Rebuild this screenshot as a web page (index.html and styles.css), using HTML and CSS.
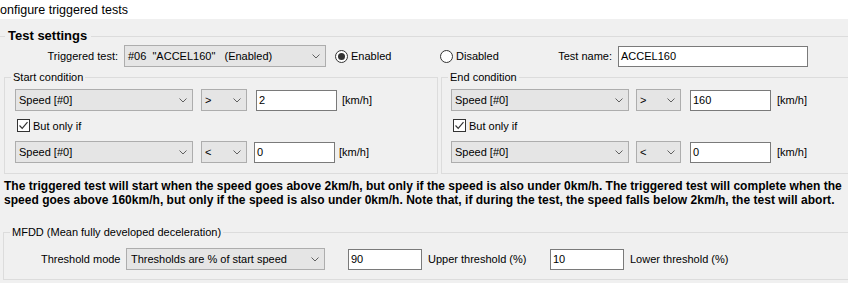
FILE: index.html
```html
<!DOCTYPE html>
<html>
<head>
<meta charset="utf-8">
<link rel="stylesheet" href="styles.css">
</head>
<body>
<div class="title"><span class="title-text">Configure triggered tests</span></div>
<fieldset class="grp grp-main">
  <legend class="lg lg-main">Test settings</legend>
  <div class="row-top">
    <span class="lbl-trig">Triggered test:</span>
    <div class="combo combo-trig"><span class="combo-text">#06  "ACCEL160"   (Enabled)</span><svg class="chev" width="8" height="5" viewBox="0 0 8 5"><path d="M0.5 0.5 L4 4 L7.5 0.5" fill="none" stroke="#606060" stroke-width="1"/></svg></div>
    <div class="radio radio-en"><span class="dot dot-on"></span><span>Enabled</span></div>
    <div class="radio radio-dis"><span class="dot"></span><span>Disabled</span></div>
    <span class="lbl-name"><span>Test name:</span></span>
    <div class="input input-name">ACCEL160</div>
  </div>
  <div class="conds">
    <fieldset class="grp grp-start">
      <legend class="lg">Start condition</legend>
      <div class="cbody cbody-start">
        <div class="crow">
          <div class="combo combo-sig"><span class="combo-text">Speed [#0]</span><svg class="chev" width="8" height="5" viewBox="0 0 8 5"><path d="M0.5 0.5 L4 4 L7.5 0.5" fill="none" stroke="#606060" stroke-width="1"/></svg></div>
          <div class="combo combo-op"><span class="combo-text">&gt;</span><svg class="chev" width="8" height="5" viewBox="0 0 8 5"><path d="M0.5 0.5 L4 4 L7.5 0.5" fill="none" stroke="#606060" stroke-width="1"/></svg></div>
          <div class="input input-val">2</div>
          <span class="unit">[km/h]</span>
        </div>
        <div class="chk-row"><span class="chk"><svg width="11" height="11" viewBox="0 0 11 11"><path d="M1.5 5.5 L4.2 8.3 L9.5 2.2" fill="none" stroke="#333" stroke-width="1.2"/></svg></span><span>But only if</span></div>
        <div class="crow crow-2">
          <div class="combo combo-sig"><span class="combo-text">Speed [#0]</span><svg class="chev" width="8" height="5" viewBox="0 0 8 5"><path d="M0.5 0.5 L4 4 L7.5 0.5" fill="none" stroke="#606060" stroke-width="1"/></svg></div>
          <div class="combo combo-op"><span class="combo-text">&lt;</span><svg class="chev" width="8" height="5" viewBox="0 0 8 5"><path d="M0.5 0.5 L4 4 L7.5 0.5" fill="none" stroke="#606060" stroke-width="1"/></svg></div>
          <div class="input input-val input-val2">0</div>
          <span class="unit unit-2">[km/h]</span>
        </div>
      </div>
    </fieldset>
    <fieldset class="grp grp-end">
      <legend class="lg">End condition</legend>
      <div class="cbody cbody-end">
        <div class="crow">
          <div class="combo combo-sig"><span class="combo-text">Speed [#0]</span><svg class="chev" width="8" height="5" viewBox="0 0 8 5"><path d="M0.5 0.5 L4 4 L7.5 0.5" fill="none" stroke="#606060" stroke-width="1"/></svg></div>
          <div class="combo combo-op combo-op-end"><span class="combo-text">&gt;</span><svg class="chev" width="8" height="5" viewBox="0 0 8 5"><path d="M0.5 0.5 L4 4 L7.5 0.5" fill="none" stroke="#606060" stroke-width="1"/></svg></div>
          <div class="input input-val">160</div>
          <span class="unit unit-end">[km/h]</span>
        </div>
        <div class="chk-row"><span class="chk"><svg width="11" height="11" viewBox="0 0 11 11"><path d="M1.5 5.5 L4.2 8.3 L9.5 2.2" fill="none" stroke="#333" stroke-width="1.2"/></svg></span><span>But only if</span></div>
        <div class="crow crow-2">
          <div class="combo combo-sig"><span class="combo-text">Speed [#0]</span><svg class="chev" width="8" height="5" viewBox="0 0 8 5"><path d="M0.5 0.5 L4 4 L7.5 0.5" fill="none" stroke="#606060" stroke-width="1"/></svg></div>
          <div class="combo combo-op combo-op-end"><span class="combo-text">&lt;</span><svg class="chev" width="8" height="5" viewBox="0 0 8 5"><path d="M0.5 0.5 L4 4 L7.5 0.5" fill="none" stroke="#606060" stroke-width="1"/></svg></div>
          <div class="input input-val">0</div>
          <span class="unit unit-end">[km/h]</span>
        </div>
      </div>
    </fieldset>
  </div>
  <p class="desc"><span class="desc-line">The triggered test will start when the speed goes above 2km/h, but only if the speed is also under 0km/h. The triggered test will complete when the</span><br><span class="desc-line">speed goes above 160km/h, but only if the speed is also under 0km/h. Note that, if during the test, the speed falls below 2km/h, the test will abort.</span></p>
  <fieldset class="grp grp-mfdd">
    <legend class="lg">MFDD (Mean fully developed deceleration)</legend>
    <div class="mrow">
      <span class="lbl-mode">Threshold mode</span>
      <div class="combo combo-mode"><span class="combo-text">Thresholds are % of start speed</span><svg class="chev" width="8" height="5" viewBox="0 0 8 5"><path d="M0.5 0.5 L4 4 L7.5 0.5" fill="none" stroke="#606060" stroke-width="1"/></svg></div>
      <div class="input input-th input-up">90</div>
      <span class="lbl-th">Upper threshold (%)</span>
      <div class="input input-th">10</div>
      <span class="lbl-th2">Lower threshold (%)</span>
    </div>
  </fieldset>
</fieldset>
</body>
</html>
```

FILE: styles.css
```css
html, body {
  margin: 0;
  padding: 0;
}
body {
  width: 848px;
  height: 283px;
  overflow: hidden;
  background: #f0f0f0;
  font-family: "Liberation Sans", Arial, sans-serif;
  font-size: 11px;
  color: #000;
}
.title {
  height: 19px;
  background: #fff;
  display: flex;
  align-items: center;
  overflow: hidden;
}
.title-text {
  margin-left: -9px;
  font-size: 12.5px;
  white-space: nowrap;
}
.grp {
  margin: 0;
  padding: 0;
  border: 1px solid #dcdcdc;
  min-width: 0;
  box-sizing: border-box;
}
.lg {
  padding: 0 2px;
  margin-left: 6px;
  line-height: 14px;
  font-size: 11px;
  white-space: nowrap;
}
.grp-main {
  margin: 9px -40px 0 -1px;
  border-bottom: none;
  padding-bottom: 20px;
}
.lg-main {
  font-weight: bold;
  font-size: 13px;
  line-height: 16px;
  margin-left: 5px;
  padding: 0 4px 0 3px;
}
.row-top {
  display: flex;
  align-items: center;
  height: 22px;
  margin-top: 1px;
}
.lbl-trig {
  width: 118px;
  text-align: right;
  margin-right: 6px;
  white-space: nowrap;
}
.combo {
  height: 22px;
  box-sizing: border-box;
  background: #e5e5e5;
  border: 1px solid #adadad;
  display: flex;
  align-items: center;
  justify-content: space-between;
  padding: 0 5px 0 3px;
  flex: none;
}
.combo-text {
  white-space: pre;
}
.chev {
  display: block;
  flex: none;
}
.combo-trig {
  width: 202px;
}
.radio {
  display: flex;
  align-items: center;
  gap: 3px;
  flex: none;
}
.radio-en {
  margin-left: 9px;
  width: 105px;
}
.radio-dis {
  width: 127px;
}
.dot {
  width: 13px;
  height: 13px;
  box-sizing: border-box;
  border: 1px solid #333;
  border-radius: 50%;
  background: #fff;
  display: flex;
  align-items: center;
  justify-content: center;
}
.dot-on::after {
  content: "";
  width: 7px;
  height: 7px;
  border-radius: 50%;
  background: #333;
}
.lbl-name {
  flex: none;
  width: 45px;
  display: flex;
  justify-content: flex-end;
  white-space: nowrap;
  margin-right: 6px;
}
.input {
  height: 22px;
  box-sizing: border-box;
  background: #fff;
  border: 1px solid #7a7a7a;
  padding: 0 2px;
  display: flex;
  align-items: center;
  flex: none;
}
.input-name {
  width: 190px;
  height: 21px;
}
.conds {
  display: flex;
  gap: 3px;
  margin-top: 3px;
  padding-left: 4px;
}
.grp-start {
  width: 434px;
  flex: none;
}
.grp-end {
  width: 440px;
  flex: none;
}
.cbody {
  padding: 5px 0 10px 0;
}
.cbody-start {
  padding-left: 10px;
}
.cbody-end {
  padding-left: 9px;
}
.crow {
  display: flex;
  align-items: center;
  height: 22px;
}
.crow-2 {
  margin-top: 9px;
}
.combo-sig {
  width: 178px;
}
.combo-op {
  width: 46px;
  margin-left: 8px;
}
.combo-op-end {
  width: 45px;
  margin-left: 7px;
}
.input-val {
  width: 81px;
  margin-left: 9px;
  height: 21px;
}
.input-val2 {
  margin-left: 7px;
}
.unit {
  margin-left: 5px;
}
.unit-2 {
  margin-left: 4px;
}
.unit-end {
  margin-left: 6px;
}
.chk-row {
  display: flex;
  align-items: center;
  gap: 3px;
  height: 13px;
  margin-top: 8px;
  margin-left: 2px;
}
.chk {
  width: 13px;
  height: 13px;
  box-sizing: border-box;
  border: 1px solid #333;
  background: #fff;
  display: flex;
  align-items: center;
  justify-content: center;
}
.chk svg {
  display: block;
}
.desc {
  margin: 5px 0 0 4px;
  font-weight: bold;
  font-size: 12px;
  line-height: 14px;
  white-space: nowrap;
}
.desc-line {
  letter-spacing: 0.02px;
}
.grp-mfdd {
  margin: 18px 0 0 3px;
}
.mrow {
  display: flex;
  align-items: center;
  height: 22px;
  padding: 9px 0 9px 37px;
}
.lbl-mode {
  width: 85px;
  flex: none;
  white-space: nowrap;
}
.combo-mode {
  width: 199px;
  padding-left: 4px;
}
.input-th {
  width: 74px;
  height: 21px;
}
.input-up {
  margin-left: 23px;
}
.lbl-th {
  width: 128px;
  padding-left: 6px;
  box-sizing: border-box;
  flex: none;
  white-space: nowrap;
}
.lbl-th2 {
  padding-left: 6px;
  white-space: nowrap;
}
```
